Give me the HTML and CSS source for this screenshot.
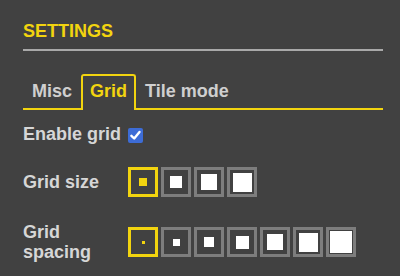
FILE: index.html
```html
<!DOCTYPE html>
<html lang="en">
<head>
  <meta charset="UTF-8" />
  <title>Settings</title>
  <link rel="stylesheet" href="styles.css">
</head>
<body>
  <div class="settings">
    <h1 class="title">SETTINGS</h1>

    <div class="tabs">
      <span class="tab">Misc</span>
      <span class="tab active">Grid</span>
      <span class="tab">Tile mode</span>
    </div>

    <div class="form">
      <div class="label">Enable grid</div>
      <div class="value">
        <span class="checkbox">
          <svg viewBox="0 0 15 15" width="15" height="15">
            <path d="M3.4 7.8 L6.2 10.5 L11.5 4" fill="none" stroke="#fff" stroke-width="2.4" stroke-linecap="round" stroke-linejoin="round"/>
          </svg>
        </span>
      </div>

      <div class="label row-gap">Grid size</div>
      <div class="value row-gap options">
        <span class="option selected"><span class="swatch" style="width:8px;height:8px"></span></span>
        <span class="option"><span class="swatch" style="width:12px;height:12px"></span></span>
        <span class="option"><span class="swatch" style="width:16px;height:16px"></span></span>
        <span class="option"><span class="swatch" style="width:19px;height:19px"></span></span>
      </div>

      <div class="label row-gap-wide multi">Grid<br>spacing</div>
      <div class="value row-gap-wide options">
        <span class="option selected"><span class="swatch" style="width:3px;height:3px"></span></span>
        <span class="option"><span class="swatch" style="width:7px;height:7px"></span></span>
        <span class="option"><span class="swatch" style="width:10px;height:10px"></span></span>
        <span class="option"><span class="swatch" style="width:13px;height:13px"></span></span>
        <span class="option"><span class="swatch" style="width:16px;height:16px"></span></span>
        <span class="option"><span class="swatch" style="width:19px;height:19px"></span></span>
        <span class="option"><span class="swatch" style="width:22px;height:22px"></span></span>
      </div>
    </div>
  </div>
</body>
</html>
```

FILE: styles.css
```css
* {
  margin: 0;
  padding: 0;
  box-sizing: border-box;
  font-family: 'Liberation Sans', Arial, sans-serif;
}

body {
  background: #414141;
  color: #d6d6d6;
  width: 400px;
  height: 276px;
  overflow: hidden;
}

.settings {
  width: 360px;
  margin-left: 23px;
  padding-top: 21px;
}

.title {
  font-size: 18px;
  line-height: 21px;
  font-weight: bold;
  color: #f2d40f;
  padding-bottom: 7px;
  border-bottom: 2px solid #a9a9a9;
}

.tabs {
  display: flex;
  align-items: flex-end;
  margin-top: 23px;
  border-bottom: 2px solid #f2d40f;
}

.tab {
  font-size: 18px;
  line-height: 21px;
  font-weight: bold;
  color: #cfcfcf;
  padding: 5px 7px 6px;
  border: 2px solid transparent;
  border-bottom: none;
}

.tab.active {
  color: #f2d40f;
  border-color: #f2d40f;
  border-radius: 3px 3px 0 0;
  background: #414141;
  padding-bottom: 8px;
  margin-bottom: -2px;
}

.form {
  display: grid;
  grid-template-columns: 105px auto;
  align-items: center;
  margin-top: 14px;
}

.label {
  font-size: 18px;
  line-height: 21px;
  font-weight: bold;
  color: #d6d6d6;
}

.label.multi {
  line-height: 20px;
}

.row-gap {
  margin-top: 22px;
}

.row-gap-wide {
  margin-top: 25px;
}

.value {
  display: flex;
}

.checkbox {
  width: 15px;
  height: 15px;
  border-radius: 2px;
  background: #3d6cd6;
  display: flex;
  margin-top: 1px;
  align-self: flex-start;
}

.options {
  gap: 3px;
}

.option {
  width: 30px;
  height: 30px;
  border: 3px solid #7d7d7d;
  display: flex;
  justify-content: center;
  align-items: center;
}

.swatch {
  background: #ffffff;
}

.option.selected {
  border-color: #f2d40f;
}

.option.selected .swatch {
  background: #f2d40f;
}
```
